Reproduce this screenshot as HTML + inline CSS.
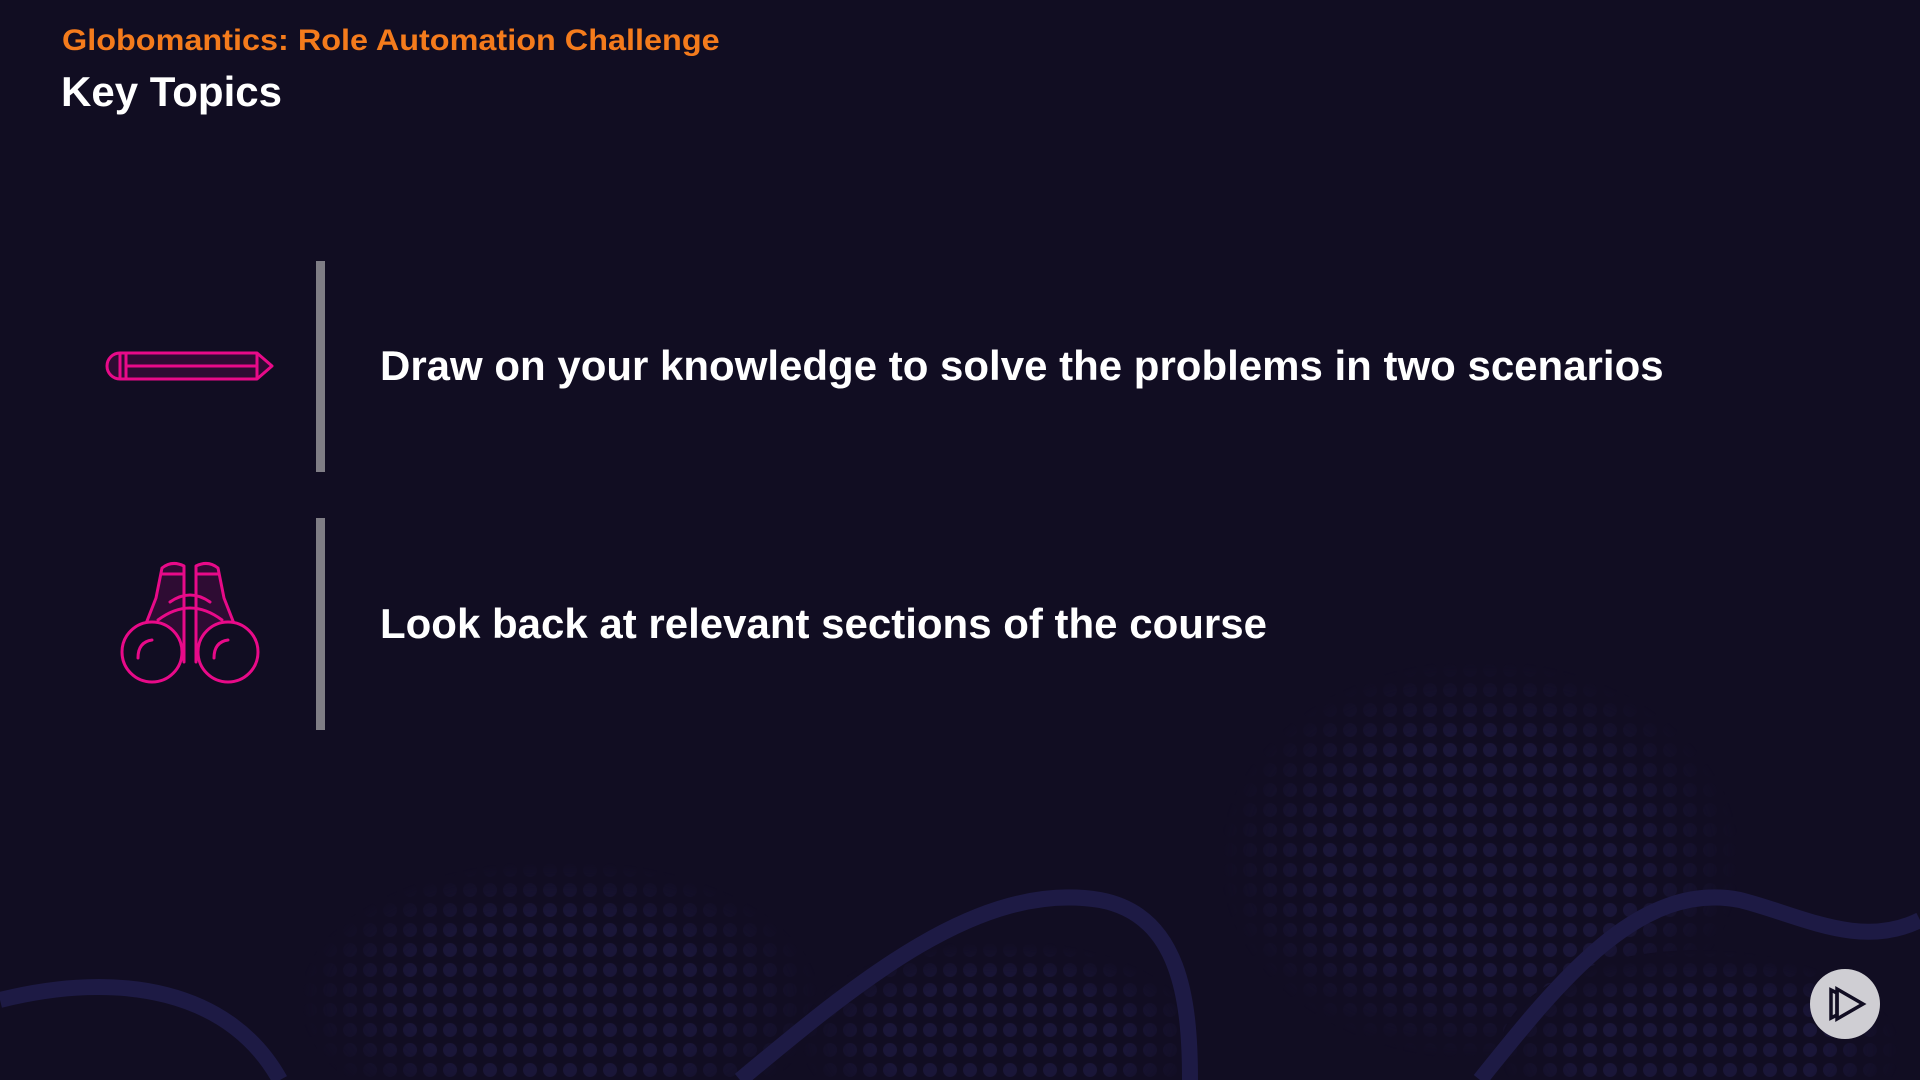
<!DOCTYPE html>
<html><head><meta charset="utf-8"><style>
html,body{margin:0;padding:0}
body{width:1920px;height:1080px;background:#110d22;position:relative;overflow:hidden;font-family:"Liberation Sans",sans-serif;font-weight:bold}
.t{position:absolute;white-space:nowrap;transform-origin:left center}
.bar{position:absolute;left:316px;width:9px;background:#7f7d85}
</style></head><body>
<svg style="position:absolute;left:0;top:0" width="1920" height="1080">
<defs>
<pattern id="d" width="20" height="20" patternUnits="userSpaceOnUse"><circle cx="10" cy="10" r="7" fill="#1a1638"/></pattern>
<radialGradient id="g1" cx="0.5" cy="0.5" r="0.5"><stop offset="0.6" stop-color="#fff"/><stop offset="1" stop-color="#000"/></radialGradient>
<mask id="m1"><ellipse cx="1480" cy="860" rx="260" ry="200" fill="url(#g1)"/><ellipse cx="560" cy="1000" rx="260" ry="140" fill="url(#g1)"/><ellipse cx="1000" cy="1040" rx="200" ry="100" fill="url(#g1)"/><ellipse cx="1700" cy="1050" rx="200" ry="100" fill="url(#g1)"/></mask>
</defs>
<rect width="1920" height="1080" fill="url(#d)" mask="url(#m1)"/>
<path d="M0 1000 C120 970 230 990 280 1080" stroke="#1d1a44" stroke-width="16" fill="none"/>
<path d="M740 1080 C860 980 980 880 1100 900 C1180 915 1190 1000 1190 1080" stroke="#1d1a44" stroke-width="16" fill="none"/>
<path d="M1480 1080 C1560 980 1640 880 1740 900 C1800 915 1860 950 1920 920" stroke="#1d1a44" stroke-width="16" fill="none"/>
</svg>
<div class="t" style="left:62px;top:24px;font-size:30px;color:#f47b1c;transform:scaleX(1.08)">Globomantics: Role Automation Challenge</div>
<div class="t" style="left:61px;top:68px;font-size:42px;color:#fff">Key Topics</div>
<div class="bar" style="top:261px;height:211px"></div>
<div class="bar" style="top:518px;height:212px"></div>
<div class="t" style="left:380px;top:342px;font-size:42px;color:#fff">Draw on your knowledge to solve the problems in two scenarios</div>
<div class="t" style="left:380px;top:600px;font-size:42px;color:#fff">Look back at relevant sections of the course</div>
<svg style="position:absolute;left:100px;top:345px" width="180" height="40" viewBox="0 0 180 40">
<g stroke="#e80a89" stroke-width="3" fill="none" stroke-linejoin="round">
<path d="M20 8 H157 L172 21 L157 34 H20 A13 13 0 0 1 20 8 Z" fill="#2e0c33"/>
<line x1="20" y1="8" x2="20" y2="34"/><line x1="26" y1="8" x2="26" y2="34"/>
<line x1="26" y1="21" x2="157" y2="21"/><line x1="157" y1="8" x2="157" y2="34"/>
</g></svg>
<svg style="position:absolute;left:118px;top:558px" width="144" height="132" viewBox="0 0 144 132">
<g stroke="#e80a89" stroke-width="3" fill="none" stroke-linecap="round" stroke-linejoin="round">
<path d="M20 86 L38 40 L44 10 Q54 2 66 8 L66 104" fill="#2e0c33"/>
<path d="M124 86 L106 40 L100 10 Q90 2 78 8 L78 104" fill="#2e0c33"/>
<line x1="44" y1="16" x2="66" y2="16"/><line x1="78" y1="16" x2="100" y2="16"/>
<path d="M52 44 Q72 30 92 44"/><path d="M40 62 Q72 38 104 62"/>
<circle cx="34" cy="94" r="30" fill="#110d22"/><circle cx="110" cy="94" r="30" fill="#110d22"/>
<path d="M20 100 Q20 84 34 82"/><path d="M96 100 Q96 84 110 82"/>
</g></svg>
<svg style="position:absolute;left:1809px;top:968px" width="72" height="72" viewBox="0 0 72 72">
<circle cx="36" cy="36" r="35" fill="#cfced3"/>
<g stroke="#110d22" stroke-width="3.5" fill="none" stroke-linejoin="miter">
<path d="M22 22 L22 50 L28 47 L28 25 Z"/>
<path d="M28 21 L54 36 L28 51 Z"/>
</g></svg>
</body></html>
